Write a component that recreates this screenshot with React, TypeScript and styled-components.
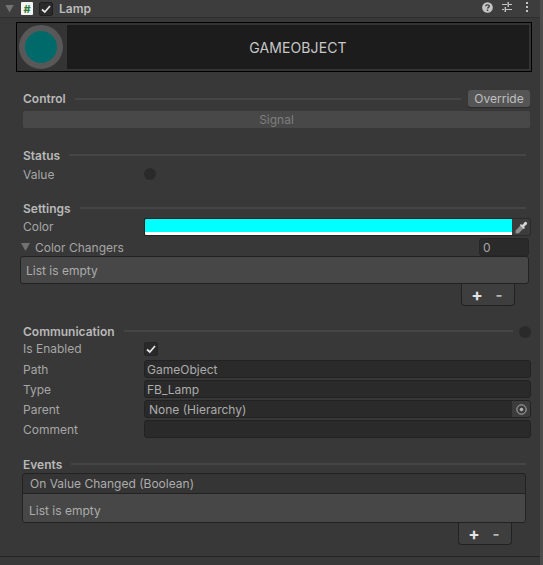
import styled, { createGlobalStyle } from "styled-components";

const GlobalStyle = createGlobalStyle`
  html, body {
    margin: 0;
    padding: 0;
    background: #383838;
  }
  body {
    font-family: Inter, "Noto Sans", "Liberation Sans", sans-serif;
    font-size: 12px;
    color: #b4b4b4;
  }
`;

const Window = styled.div`
  width: 543px;
  height: 565px;
  overflow: hidden;
  display: flex;
  background: #383838;
`;

const Panel = styled.div`
  width: 540px;
  height: 565px;
  display: flex;
  flex-direction: column;
`;

const ScrollEdge = styled.div`
  width: 3px;
  background: #4c4c4c;
`;

const Header = styled.div`
  height: 17px;
  display: flex;
  align-items: center;
  background: #3d3d3d;
  border-bottom: 1px solid #2f2f2f;
  padding-left: 5px;
`;

const HeaderTitle = styled.span`
  margin-left: 6px;
  font-weight: 600;
  color: #bcbcbc;
`;

const HeaderIcons = styled.div`
  margin-left: auto;
  margin-right: 11px;
  padding-bottom: 3px;
  display: flex;
  align-items: center;
  gap: 9px;

  svg:last-child {
    margin-left: 4px;
  }
`;

const ScriptIcon = styled.span`
  width: 12px;
  height: 13px;
  margin-left: 2px;
  display: flex;
  align-items: center;
  justify-content: center;
  background: #f4f4f4;
  color: #2c7a36;
  font-size: 11px;
  font-weight: 700;
  border-radius: 1px;
`;

const HeaderCheck = styled.span`
  width: 14px;
  height: 14px;
  margin-left: 6px;
  display: flex;
  align-items: center;
  justify-content: center;
  background: #2a2a2a;
  border: 1px solid #1f1f1f;
  border-radius: 2px;
  box-sizing: border-box;
`;

const Banner = styled.div`
  height: 50px;
  margin: 4px 0 0 16px;
  width: 516px;
  box-sizing: border-box;
  border: 1px solid #000;
  padding: 2px;
  display: flex;
  background: #343434;
`;

const Lamp = styled.div`
  width: 44px;
  height: 44px;
  flex: none;
  box-sizing: border-box;
  border: 6px solid #585858;
  border-radius: 50%;
  background: #006a6a;
  margin-right: 4px;
`;

const BannerTitle = styled.div`
  flex: 1;
  display: flex;
  align-items: center;
  justify-content: center;
  background: #1c1c1c;
  color: #c8c8c8;
  font-size: 14px;
  letter-spacing: 0.1px;
`;

const Body = styled.div`
  padding: 0 10px 0 23px;
  display: flex;
  flex-direction: column;
`;

const SectionHead = styled.div<{ $top: number }>`
  height: 16px;
  margin-top: ${(p) => p.$top}px;
  display: flex;
  align-items: center;
  gap: 9px;
  font-weight: 600;
  color: #b8b8b8;
`;

const ControlHead = styled(SectionHead)`
  height: 17px;
`;

const Rule = styled.div<{ $inset?: number }>`
  flex: 1;
  height: 2px;
  background: #454545;
  margin-right: ${(p) => p.$inset ?? 0}px;
`;

const OverrideButton = styled.div`
  width: 62px;
  height: 17px;
  margin-left: -2px;
  display: flex;
  align-items: center;
  justify-content: center;
  background: #555;
  border-radius: 3px;
  color: #c0c0c0;
  font-weight: 400;
  box-shadow: 0 1px 0 #2a2a2a;
`;

const SignalBar = styled.div`
  height: 17px;
  margin-top: 4px;
  display: flex;
  align-items: center;
  justify-content: center;
  background: #484848;
  border-radius: 2px;
  color: #7e7e7e;
`;

const FieldRow = styled.div<{ $top?: number }>`
  height: 18px;
  margin-top: ${(p) => p.$top ?? 0}px;
  display: flex;
  align-items: center;
`;

const FieldLabel = styled.span`
  width: 121px;
  flex: none;
  color: #a6a6a6;
`;

const ColorLabel = styled(FieldLabel)`
  margin-bottom: 2px;
`;

const Dot = styled.span`
  width: 12px;
  height: 12px;
  border-radius: 50%;
  background: #2a2a2a;
`;

const SectionDot = styled(Dot)`
  margin: 2px -1px 0 -3px;
`;

const Swatch = styled.div`
  flex: 1;
  height: 18px;
  box-sizing: border-box;
  border: 1px solid #222;
  border-right: none;
  border-radius: 2px 0 0 2px;
  background: linear-gradient(#00ffff 0 13px, #fff 13px);
`;

const Picker = styled.span`
  width: 19px;
  height: 18px;
  box-sizing: border-box;
  border: 1px solid #2a2a2a;
  border-left: none;
  border-radius: 0 3px 3px 0;
  background: #3c3c3c;
  display: flex;
  align-items: center;
  justify-content: center;
  margin-right: -1px;
`;

const FoldRow = styled.div`
  height: 18px;
  margin: 2px 1px 0 -2px;
  display: flex;
  align-items: center;
  color: #a6a6a6;
`;

const Arrow = styled.span`
  width: 9px;
  height: 8px;
  flex: none;
  background: #727272;
  clip-path: polygon(0 0, 100% 0, 50% 100%);
  margin-right: 5px;
`;

const CountField = styled.div`
  margin-left: auto;
  width: 50px;
  height: 18px;
  box-sizing: border-box;
  padding-left: 3px;
  background: #2a2a2a;
  border: 1px solid #262626;
  border-radius: 3px;
  display: flex;
  align-items: center;
`;

const ListBox = styled.div`
  height: 28px;
  margin: 0 1px 0 -3px;
  box-sizing: border-box;
  padding-left: 5px;
  display: flex;
  align-items: center;
  background: #474747;
  border: 1px solid #222;
  border-radius: 3px;
  color: #acacac;
`;

const Footer = styled.div`
  align-self: flex-end;
  width: 54px;
  height: 22px;
  margin-right: 15px;
  box-sizing: border-box;
  border: 1px solid #222;
  border-top: none;
  border-radius: 0 0 4px 4px;
  background: #3e3e3e;
  display: flex;
  align-items: center;
  justify-content: center;
  font-weight: 700;
`;

const Plus = styled.span`
  width: 22px;
  text-align: center;
  color: #e4e4e4;
  font-size: 17px;
`;

const Minus = styled.span`
  width: 22px;
  text-align: center;
  color: #b4b4b4;
  font-size: 15px;
`;

const Input = styled.div`
  flex: 1;
  height: 18px;
  box-sizing: border-box;
  padding-left: 2px;
  margin-right: -1px;
  background: #2a2a2a;
  border: 1px solid #222;
  border-radius: 3px;
  display: flex;
  align-items: center;
  color: #acacac;
  overflow: hidden;
`;

const ObjectText = styled.span`
  flex: 1;
  padding-left: 2px;
`;

const PickerSlot = styled.span`
  width: 18px;
  height: 16px;
  background: #3c3c3c;
  display: flex;
  align-items: center;
  justify-content: center;
`;

const CheckBox = styled.span`
  width: 14px;
  height: 14px;
  margin-top: 2px;
  box-sizing: border-box;
  background: #2a2a2a;
  border: 1px solid #242424;
  border-radius: 2px;
  display: flex;
  align-items: center;
  justify-content: center;
`;

const EventBox = styled.div`
  margin: 1px 0 0 -1px;
  width: 504px;
  box-sizing: border-box;
  border: 1px solid #222;
  border-radius: 3px;
  background: #353535;
  overflow: hidden;
`;

const EventHead = styled.div`
  height: 19px;
  padding-left: 7px;
  display: flex;
  align-items: center;
  border-bottom: 1px solid #222;
  color: #acacac;
`;

const EventEmpty = styled.div`
  height: 28px;
  box-sizing: border-box;
  padding: 4px 0 0 6px;
  display: flex;
  align-items: center;
  background: #474747;
  color: #acacac;
`;

const EventFooter = styled(Footer)`
  margin-right: 18px;
`;

const BottomLine = styled.div`
  margin-top: 11px;
  height: 1px;
  background: #242424;
`;

function Check() {
  return (
    <svg width="10" height="10" viewBox="0 0 10 10">
      <path d="M1 5.5 L3.8 8 L9 2" fill="none" stroke="#e6e6e6" strokeWidth="1.7" />
    </svg>
  );
}

function HelpIcon() {
  return (
    <svg width="11" height="11" viewBox="0 0 12 12">
      <circle cx="6" cy="6" r="5.8" fill="#c4c4c4" />
      <path d="M4 4.6 C4 2.6 8 2.6 8 4.6 C8 5.8 6 5.8 6 7.2" fill="none" stroke="#3d3d3d" strokeWidth="1.5" />
      <rect x="5.2" y="8.2" width="1.6" height="1.6" fill="#3d3d3d" />
    </svg>
  );
}

function SlidersIcon() {
  return (
    <svg width="10" height="10" viewBox="0 0 10 10" fill="#c4c4c4">
      <rect x="0" y="2" width="5" height="1" />
      <rect x="7" y="2" width="3" height="1" />
      <rect x="5.5" y="0" width="1.4" height="5" />
      <rect x="0" y="7" width="2" height="1" />
      <rect x="4" y="7" width="6" height="1" />
      <rect x="2.6" y="5" width="1.4" height="5" />
    </svg>
  );
}

function MoreIcon() {
  return (
    <svg width="4" height="10" viewBox="0 0 4 10" fill="#c4c4c4">
      <rect x="1" y="0" width="2" height="2" />
      <rect x="1" y="4" width="2" height="2" />
      <rect x="1" y="8" width="2" height="2" />
    </svg>
  );
}

function Eyedropper() {
  return (
    <svg width="13" height="13" viewBox="0 0 12 12">
      <path d="M0.5 11.5 L0.8 8.5 L5.5 3.8 L8.2 6.5 L3.5 11.2 Z" fill="#8e8e8e" />
      <path d="M5 3 L7 3.4 L9 1 C10 0 12 2 11 3 L8.6 5 L9 7 L8 7.4 L4.6 4 Z" fill="#d4d4d4" />
    </svg>
  );
}

function TargetIcon() {
  return (
    <svg width="11" height="11" viewBox="0 0 11 11">
      <circle cx="5.5" cy="5.5" r="4.7" fill="none" stroke="#b0b0b0" strokeWidth="1" />
      <circle cx="5.5" cy="5.5" r="1.8" fill="#b0b0b0" />
    </svg>
  );
}

export default function App() {
  return (
    <>
      <GlobalStyle />
      <Window>
        <Panel>
          <Header>
            <Arrow />
            <ScriptIcon>#</ScriptIcon>
            <HeaderCheck>
              <Check />
            </HeaderCheck>
            <HeaderTitle>Lamp</HeaderTitle>
            <HeaderIcons>
              <HelpIcon />
              <SlidersIcon />
              <MoreIcon />
            </HeaderIcons>
          </Header>
          <Banner>
            <Lamp />
            <BannerTitle>GAMEOBJECT</BannerTitle>
          </Banner>
          <Body>
            <ControlHead $top={18}>
              Control
              <Rule />
              <OverrideButton>Override</OverrideButton>
            </ControlHead>
            <SignalBar>Signal</SignalBar>

            <SectionHead $top={19}>
              Status
              <Rule $inset={4} />
            </SectionHead>
            <FieldRow $top={2}>
              <FieldLabel>Value</FieldLabel>
              <Dot />
            </FieldRow>

            <SectionHead $top={17}>
              Settings
              <Rule $inset={4} />
            </SectionHead>
            <FieldRow $top={2}>
              <ColorLabel>Color</ColorLabel>
              <Swatch />
              <Picker>
                <Eyedropper />
              </Picker>
            </FieldRow>
            <FoldRow>
              <Arrow />
              Color Changers
              <CountField>0</CountField>
            </FoldRow>
            <ListBox>List is empty</ListBox>
            <Footer>
              <Plus>+</Plus>
              <Minus>-</Minus>
            </Footer>

            <SectionHead $top={17}>
              Communication
              <Rule />
              <SectionDot />
            </SectionHead>
            <FieldRow>
              <FieldLabel>Is Enabled</FieldLabel>
              <CheckBox>
                <Check />
              </CheckBox>
            </FieldRow>
            <FieldRow $top={3}>
              <FieldLabel>Path</FieldLabel>
              <Input>GameObject</Input>
            </FieldRow>
            <FieldRow $top={2}>
              <FieldLabel>Type</FieldLabel>
              <Input>FB_Lamp</Input>
            </FieldRow>
            <FieldRow $top={2}>
              <FieldLabel>Parent</FieldLabel>
              <Input>
                <ObjectText>None (Hierarchy)</ObjectText>
                <PickerSlot>
                  <TargetIcon />
                </PickerSlot>
              </Input>
            </FieldRow>
            <FieldRow $top={2}>
              <FieldLabel>Comment</FieldLabel>
              <Input />
            </FieldRow>

            <SectionHead $top={18}>
              Events
              <Rule $inset={4} />
            </SectionHead>
            <EventBox>
              <EventHead>On Value Changed (Boolean)</EventHead>
              <EventEmpty>List is empty</EventEmpty>
            </EventBox>
            <EventFooter>
              <Plus>+</Plus>
              <Minus>-</Minus>
            </EventFooter>
          </Body>
          <BottomLine />
        </Panel>
        <ScrollEdge />
      </Window>
    </>
  );
}
